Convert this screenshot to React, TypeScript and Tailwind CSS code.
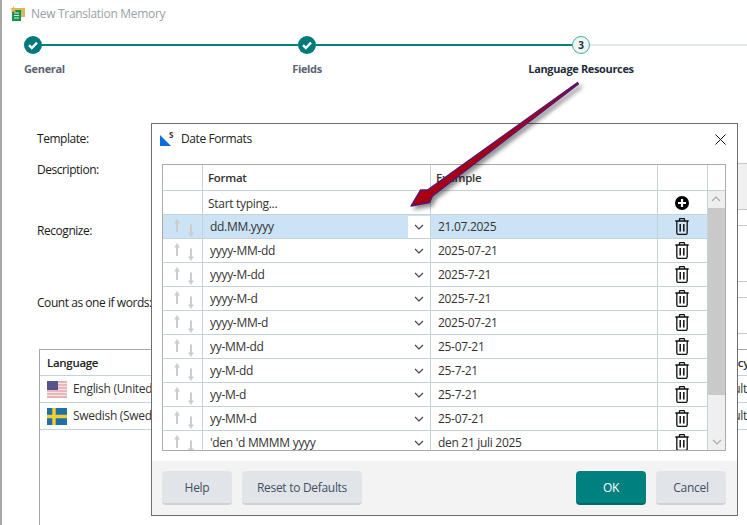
const rows = [
  ['dd.MM.yyyy', '21.07.2025'],
  ['yyyy-MM-dd', '2025-07-21'],
  ['yyyy-M-dd', '2025-7-21'],
  ['yyyy-M-d', '2025-7-21'],
  ['yyyy-MM-d', '2025-07-21'],
  ['yy-MM-dd', '25-07-21'],
  ['yy-M-dd', '25-7-21'],
  ['yy-M-d', '25-7-21'],
  ['yy-MM-d', '25-07-21'],
  ["'den 'd MMMM yyyy", 'den 21 juli 2025'],
];

function Check() {
  return (
    <svg width="18" height="18" viewBox="0 0 18 18" className="shrink-0">
      <circle cx="9" cy="9" r="9" fill="#00797a" />
      <path d="M5 9.200l2.800 2.800L13 6.600" fill="none" stroke="#fff" strokeWidth="2.400" />
    </svg>
  );
}

function Chevron({ color = '#444' }: { color?: string }) {
  return (
    <svg width="10" height="6" viewBox="0 0 10 6">
      <path d="M1 1l4 4 4-4" fill="none" stroke={color} strokeWidth="1.200" />
    </svg>
  );
}

function Trash() {
  return (
    <svg width="14" height="17" viewBox="0 0 14 17">
      <path d="M4.500 2.500V1.200q0-.6.6-.6h3.800q.6 0 .6.600v1.300M.3 3h13.400M1.800 3v11.800A1.600 1.600 0 0 0 3.400 16.400h7.200a1.600 1.600 0 0 0 1.600-1.600V3" fill="none" stroke="#111" strokeWidth="1.300" />
      <path d="M5.200 6v7.500M8.800 6v7.500" fill="none" stroke="#111" strokeWidth="1.500" />
    </svg>
  );
}

function Plus() {
  return (
    <svg width="14" height="14" viewBox="0 0 14 14">
      <circle cx="7" cy="7" r="7" fill="#000" />
      <path d="M7 3v8M3 7h8" stroke="#fff" strokeWidth="2.200" />
    </svg>
  );
}

function UpDown() {
  return (
    <svg width="24" height="24" viewBox="0 0 24 24">
      <path d="M6 4L3 8.500h2V17h2V8.500h2zM20 22l3-4.500h-2V9.500h-2v8h-2z" fill="#c9cdcf" />
    </svg>
  );
}

function UsFlag() {
  return (
    <svg width="20" height="17" viewBox="0 0 20 17" className="shrink-0">
      <rect width="20" height="17" fill="#e9a8ae" />
      <path d="M0 2.500h20M0 5.500h20M0 8.500h20M0 11.500h20M0 14.500h20" stroke="#f3e4e6" strokeWidth="1.300" />
      <rect width="11" height="9" fill="#55558c" />
    </svg>
  );
}

function SeFlag() {
  return (
    <svg width="20" height="17" viewBox="0 0 20 17" className="shrink-0">
      <rect width="20" height="17" fill="#1f6fa8" />
      <path d="M7 0v17M0 8.500h20" stroke="#f2cf2e" strokeWidth="3.400" />
    </svg>
  );
}

function FormRow({ label, h, mb, pt, children }: { label: string; h: string; mb: string; pt: string; children?: React.ReactNode }) {
  return (
    <div className={`flex ${h} ${mb}`}>
      <div className={`w-[120px] shrink-0 text-[#1a1a1a] leading-[14px] tracking-[-0.45px] whitespace-nowrap ${pt}`}>{label}</div>
      {children}
    </div>
  );
}

export default function App() {
  return (
    <div className="relative w-[747px] h-[525px] overflow-hidden bg-white border-l-2 border-[#a8a8a8] font-['Open_Sans',sans-serif] text-[12px] tracking-[-0.3px]">
      {/* Wizard title */}
      <div className="flex items-center h-[27px] pl-[8px] gap-[6px]">
        <svg width="15" height="15" viewBox="0 0 15 15">
          <rect x="2" y="2" width="13" height="9" fill="#d9b860" />
          <rect x="2" y="4" width="9" height="11" fill="#12924f" />
          <path d="M4 7h5M4 9.500h5M4 12h5" stroke="#d6efe0" />
          <path d="M3.500 0l1 2.300 2.400.2-1.800 1.600.6 2.400-2.200-1.300-2.200 1.300.6-2.400L0 2.500l2.400-.2z" fill="#e8b64c" />
        </svg>
        <span className="text-[#9aa0a8]">New Translation Memory</span>
      </div>

      {/* Stepper */}
      <div className="flex items-center mt-[9px] pl-[22px] h-[18px]">
        <Check />
        <div className="w-[256px] h-[2px] bg-[#00837f]" />
        <Check />
        <div className="w-[256px] h-[2px] bg-[#00837f]" />
        <div className="w-[18px] h-[18px] shrink-0 rounded-full border border-[#4fa5a5] bg-[#eef6f6] flex items-center justify-center text-[10px] font-bold text-[#27323f]">3</div>
        <div className="flex-1 h-[2px] bg-[#e4e9ed]" />
      </div>
      <div className="flex mt-[8px] pl-[22px] h-[14px] leading-[14px] text-[11px] font-bold tracking-[-0.35px]">
        <div className="w-[233px] text-[#5a6474]">General</div>
        <div className="w-[100px] text-center text-[#5a6474]">Fields</div>
        <div className="ml-[124px] w-[200px] text-center text-[#1f2d3d]">Language Resources</div>
      </div>

      {/* Form behind the dialog */}
      <div className="mt-[52px] pl-[35px]">
        <FormRow label="Template:" h="h-[20px]" mb="mb-[15px]" pt="pt-[4px]" />
        <FormRow label="Description:" h="h-[47px]" mb="mb-[15px]" pt="">
          <div className="flex-1 bg-[#f0f0f0] border-y border-[#c6c6c6]" />
        </FormRow>
        <FormRow label="Recognize:" h="h-[57px]" mb="mb-[15px]" pt="mt-[-1px]">
          <div className="flex-1 border-y border-[#c6c6c6]" />
        </FormRow>
        <FormRow label="Count as one if words:" h="h-[37px]" mb="mb-[15px]" pt="mt-[-1px]">
          <div className="flex-1 border-y border-[#c6c6c6]" />
        </FormRow>
      </div>

      {/* Language table */}
      <div className="ml-[37px] border-l border-t border-[#a8a8a8] h-[200px]">
        <div className="flex items-center justify-between h-[26px] pt-[1px] border-b border-[#c3d3da] pl-[7px] text-[11.5px] font-semibold text-[#222]">
          <span>Language</span>
          <span className="mr-[-2px] text-[#333]">Dependency</span>
        </div>
        <div className="flex items-center justify-between h-[27px] border-b border-[#c3d3da] pl-[7px] text-[#333]">
          <span className="flex items-center gap-[6px]"><UsFlag />English (United States)</span>
          <span>Default</span>
        </div>
        <div className="flex items-center justify-between h-[27px] border-b border-[#c3d3da] pl-[7px] text-[#333]">
          <span className="flex items-center gap-[6px]"><SeFlag />Swedish (Sweden)</span>
          <span>Default</span>
        </div>
      </div>

      {/* Date Formats dialog */}
      <div className="absolute left-[149px] top-[123px] w-[587px] h-[393px] border border-[#6e6e6e] bg-white flex flex-col">
        <div className="flex items-center h-[40px] pb-[10px] pl-[8px] pr-[11px] shrink-0 tracking-[-0.4px]">
          <div className="relative w-[15px] h-[15px]">
            <svg width="15" height="15" viewBox="0 0 15 15" className="absolute top-[1px] left-0">
              <path d="M0 2l11 11H0z" fill="#0b6fe0" />
            </svg>
            <span className="absolute left-[9px] top-[-3px] text-[8px] font-bold text-[#333]">S</span>
          </div>
          <span className="ml-[6px] text-[#222]">Date Formats</span>
          <svg width="11" height="11" viewBox="0 0 11 11" className="ml-auto">
            <path d="M.5.500l10 10M10.500.500l-10 10" stroke="#111" strokeWidth="1" />
          </svg>
        </div>

        <div className="ml-[10px] w-[564px] h-[287px] shrink-0 border border-[#aaaaaa] flex overflow-hidden">
          <div className="w-[544px] shrink-0 flex flex-col">
            <div className="flex h-[26px] shrink-0 border-b border-[#c3d3da] text-[11.5px] font-semibold text-[#333]">
              <div className="w-[40px] border-r border-[#c3d3da]" />
              <div className="w-[228px] border-r border-[#c3d3da] pl-[5px] flex items-center">Format</div>
              <div className="w-[227px] border-r border-[#c3d3da] pl-[5px] flex items-center">Example</div>
              <div className="w-[49px]" />
            </div>
            <div className="flex h-[24px] shrink-0 border-b border-[#c3d3da] text-[#333]">
              <div className="w-[40px] border-r border-[#c3d3da]" />
              <div className="w-[228px] border-r border-[#c3d3da] pl-[5px] pt-[2px] flex items-center">Start typing...</div>
              <div className="w-[227px] border-r border-[#c3d3da]" />
              <div className="w-[49px] pr-[2px] flex items-center justify-center"><Plus /></div>
            </div>
            {rows.map(([format, example], i) => (
              <div key={format + i} className={`flex h-[24px] shrink-0 border-b border-[#c3d3da] text-[#333] ${i === 0 ? 'bg-[#cbe3f5]' : ''}`}>
                <div className="w-[40px] border-r border-[#c3d3da] flex items-center justify-center"><UpDown /></div>
                <div className="w-[228px] border-r border-[#c3d3da] pl-[7px] flex items-center justify-between">
                  <span>{format}</span>
                  <span className={`w-[22px] h-[22px] flex items-center justify-center ${i === 0 ? 'bg-white' : ''}`}><Chevron /></span>
                </div>
                <div className="w-[227px] border-r border-[#c3d3da] pl-[7px] flex items-center">{example}</div>
                <div className="w-[49px] pr-[2px] flex items-center justify-center"><Trash /></div>
              </div>
            ))}
          </div>

          {/* Scrollbar */}
          <div className="flex-1 flex flex-col border-l border-[#c3d3da]">
            <div className="h-[26px] shrink-0 border-b border-[#c3d3da]" />
            <div className="h-[17px] shrink-0 bg-[#efefef] flex items-center justify-center rotate-180"><Chevron color="#aaa" /></div>
            <div className="h-[187px] shrink-0 bg-[#c9c9c9]" />
            <div className="flex-1 bg-[#efefef] flex items-end justify-center pb-[5px]"><Chevron color="#aaa" /></div>
          </div>
        </div>

        <div className="mt-[10px] flex-1 bg-[#f3f3f3] flex items-center gap-[10px] pl-[10px] pr-[11px]">
          <button className="w-[70px] h-[34px] pt-[1px] rounded-[4px] bg-[#e1e5e9] border-b-2 border-[#cdd1d5] text-[#44505f]">Help</button>
          <button className="w-[120px] h-[34px] pt-[1px] rounded-[4px] bg-[#e1e5e9] border-b-2 border-[#cdd1d5] text-[#44505f]">Reset to Defaults</button>
          <button className="ml-auto w-[70px] h-[34px] pt-[1px] rounded-[4px] bg-[#00807f] border-b-2 border-[#006a6a] text-white">OK</button>
          <button className="w-[70px] h-[34px] pt-[1px] rounded-[4px] bg-[#e1e5e9] border-b-2 border-[#cdd1d5] text-[#44505f]">Cancel</button>
        </div>
      </div>

      {/* Annotation arrow */}
      <svg width="747" height="525" viewBox="0 0 747 525" className="absolute left-[-2px] top-0 pointer-events-none drop-shadow-[3px_3px_2px_rgba(0,0,0,0.45)]">
        <path d="M411 206L420.500 190L427.500 190L577.500 82.500L578.500 84L432.500 196L429.500 202.500Z" fill="#a80010" stroke="#4b1a7e" strokeWidth="1.300" strokeLinejoin="round" />
      </svg>
    </div>
  );
}
